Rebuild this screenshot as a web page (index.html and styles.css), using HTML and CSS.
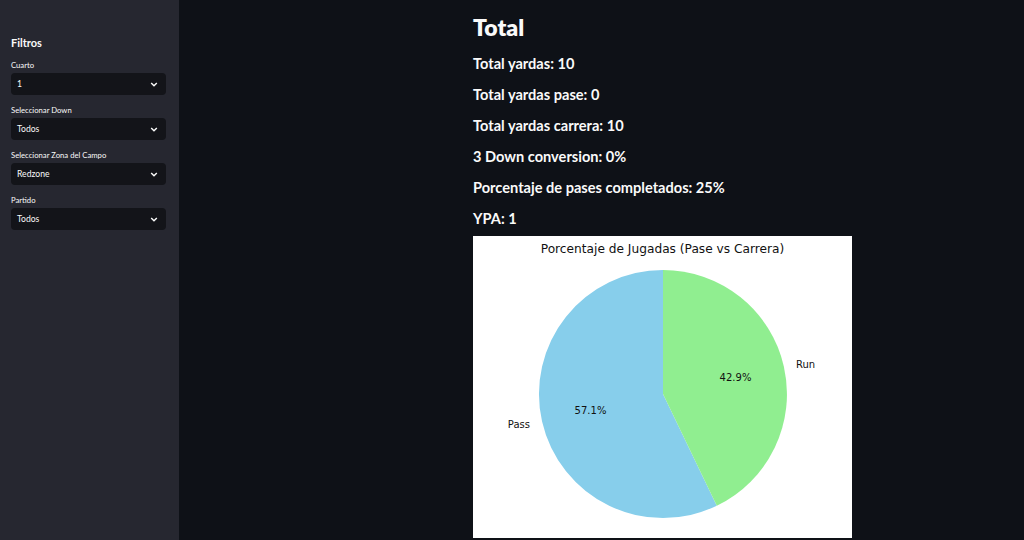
FILE: index.html
```html
<!DOCTYPE html>
<html lang="es">
<head>
    <meta charset="UTF-8">
    <meta name="viewport" content="width=device-width, initial-scale=1.0">
    <title>Estadísticas - Total</title>
    <link rel="stylesheet" href="styles.css">
</head>
<body>
    <div class="app">
        <aside class="sidebar">
            <h3 class="sidebar-title">Filtros</h3>

            <div class="field">
                <label class="field-label">Cuarto</label>
                <div class="select">
                    <span>1</span>
                    <svg class="chevron" viewBox="0 0 10 6"><path d="M1.5 1.2 L5 4.6 L8.5 1.2"/></svg>
                </div>
            </div>

            <div class="field">
                <label class="field-label">Seleccionar Down</label>
                <div class="select">
                    <span>Todos</span>
                    <svg class="chevron" viewBox="0 0 10 6"><path d="M1.5 1.2 L5 4.6 L8.5 1.2"/></svg>
                </div>
            </div>

            <div class="field">
                <label class="field-label">Seleccionar Zona del Campo</label>
                <div class="select">
                    <span>Redzone</span>
                    <svg class="chevron" viewBox="0 0 10 6"><path d="M1.5 1.2 L5 4.6 L8.5 1.2"/></svg>
                </div>
            </div>

            <div class="field">
                <label class="field-label">Partido</label>
                <div class="select">
                    <span>Todos</span>
                    <svg class="chevron" viewBox="0 0 10 6"><path d="M1.5 1.2 L5 4.6 L8.5 1.2"/></svg>
                </div>
            </div>
        </aside>

        <main class="main">
            <div class="content">
                <h2 class="page-title">Total</h2>
                <p class="stat">Total yardas: 10</p>
                <p class="stat">Total yardas pase: 0</p>
                <p class="stat">Total yardas carrera: 10</p>
                <p class="stat">3 Down conversion: 0%</p>
                <p class="stat">Porcentaje de pases completados: 25%</p>
                <p class="stat">YPA: 1</p>

                <div class="chart">
                    <svg width="379" height="302" viewBox="0 0 379 302">
                        <text class="chart-title" x="189.5" y="16.7" text-anchor="middle">Porcentaje de Jugadas (Pase vs Carrera)</text>
                        <path d="M190 158 L190 34 A124 124 0 1 0 243.8 269.7 Z" fill="#87ceeb"/>
                        <path d="M190 158 L243.8 269.7 A124 124 0 0 0 190 34 Z" fill="#90ee90"/>
                        <text class="chart-label" x="57" y="191.6" text-anchor="end">Pass</text>
                        <text class="chart-label" x="323" y="131.6">Run</text>
                        <text class="chart-label" x="117.5" y="178.2" text-anchor="middle">57.1%</text>
                        <text class="chart-label" x="262.5" y="145" text-anchor="middle">42.9%</text>
                    </svg>
                </div>
            </div>
        </main>
    </div>
</body>
</html>
```

FILE: styles.css
```css
* {
    margin: 0;
    padding: 0;
    box-sizing: border-box;
}

body {
    font-family: 'Lato', 'Open Sans', sans-serif;
    background: #0e1117;
    color: #fafafa;
    overflow: hidden;
}

.app {
    display: flex;
    height: 540px;
}

.sidebar {
    width: 179px;
    flex-shrink: 0;
    background: #262730;
    padding: 36px 13px 0 11px;
}

.sidebar-title {
    font-size: 11px;
    font-weight: 700;
    line-height: 14px;
    margin-bottom: 10px;
}

.field {
    margin-bottom: 10px;
}

.field-label {
    display: block;
    font-size: 7.7px;
    line-height: 10px;
    margin-bottom: 3px;
}

.select {
    display: flex;
    align-items: center;
    justify-content: space-between;
    height: 22px;
    background: #131419;
    border-radius: 4px;
    padding: 0 8px 0 6px;
    font-size: 8.6px;
}

.chevron {
    width: 8px;
    height: 5px;
    fill: none;
    stroke: #fafafa;
    stroke-width: 1.8;
}

.main {
    flex: 1;
    padding-left: 294px;
}

.content {
    width: 379px;
    display: flex;
    flex-direction: column;
}

.page-title {
    font-size: 23px;
    font-weight: 800;
    line-height: 28px;
    margin-top: 13px;
    margin-bottom: 2px;
}

.stat {
    font-size: 14.6px;
    font-weight: 700;
    line-height: 20px;
    margin-top: 11px;
}

.chart {
    margin-top: 7px;
    background: #ffffff;
    width: 379px;
    height: 302px;
}

.chart svg {
    display: block;
}

.chart-title {
    font-family: 'DejaVu Sans', sans-serif;
    font-size: 12.2px;
    fill: #111111;
}

.chart-label {
    font-family: 'DejaVu Sans', sans-serif;
    font-size: 10px;
    fill: #111111;
}
```
